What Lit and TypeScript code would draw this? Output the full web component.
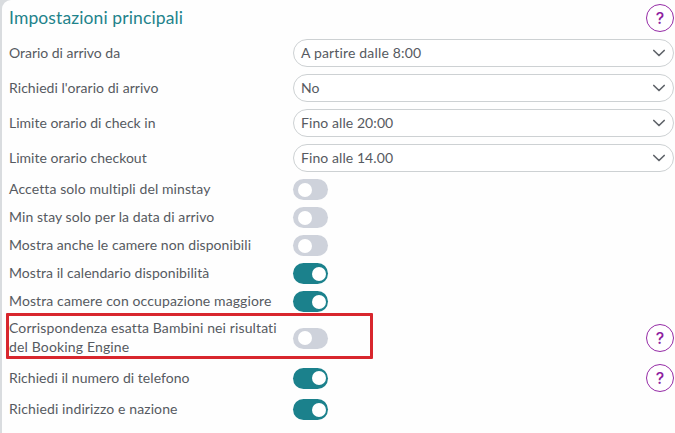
import { LitElement, html, css, svg } from "lit";
import { customElement, property } from "lit/decorators.js";
import { styleMap } from "lit/directives/style-map.js";

type Line = { text: string; spacing: number };
type Row = {
  label: Line[];
  value?: Line;
  on?: boolean;
  help?: boolean;
  marked?: boolean;
};

const line = (text: string, spacing = 0): Line => ({ text, spacing });

const rows: Row[] = [
  { label: [line("Orario di arrivo da", -0.03)], value: line("A partire dalle 8:00", 0.17) },
  { label: [line("Richiedi l'orario di arrivo", 0.05)], value: line("No") },
  { label: [line("Limite orario di check in")], value: line("Fino alle 20:00", 0.08) },
  { label: [line("Limite orario checkout", 0.02)], value: line("Fino alle 14.00", 0.08) },
  { label: [line("Accetta solo multipli del minstay", 0.1)], on: false },
  { label: [line("Min stay solo per la data di arrivo", 0.07)], on: false },
  { label: [line("Mostra anche le camere non disponibili", 0.07)], on: false },
  { label: [line("Mostra il calendario disponibilità", 0.05)], on: true },
  { label: [line("Mostra camere con occupazione maggiore", 0.11)], on: true },
  {
    label: [
      line("Corrispondenza esatta Bambini nei risultati", 0.12),
      line("del Booking Engine", 0.15),
    ],
    on: false,
    help: true,
    marked: true,
  },
  { label: [line("Richiedi il numero di telefono", 0.04)], on: true, help: true },
  { label: [line("Richiedi indirizzo e nazione", 0.11)], on: true },
];

const spaced = (l: Line) =>
  html`<span class="line" style=${styleMap({ letterSpacing: `${l.spacing}px` })}>${l.text}</span>`;

@customElement("help-button")
export class HelpButton extends LitElement {
  static styles = css`
    :host { display: block; width: 28px; height: 28px; }
    .help {
      box-sizing: border-box; width: 28px; height: 28px; padding: 0;
      display: flex; align-items: center; justify-content: center;
      border: 1.3px solid #952ba6; border-radius: 50%; background: #fff;
    }
    .glyph { font: 500 16px/1 Inter, sans-serif; color: #8d20a0; }
  `;
  render() {
    return html`<button class="help"><span class="glyph">?</span></button>`;
  }
}

@customElement("toggle-switch")
export class ToggleSwitch extends LitElement {
  @property({ type: Boolean }) on = false;
  static styles = css`
    :host { display: block; }
    .track {
      box-sizing: border-box; display: flex; align-items: center;
      width: 35px; height: 21px; padding: 0 2px 0 5px;
      border-radius: 11px; background: #ced2db;
    }
    .on { justify-content: flex-end; background: #1b818c; }
    .knob { width: 14px; height: 14px; border-radius: 50%; background: #fff; }
  `;
  render() {
    return html`<div class="track ${this.on ? "on" : ""}"><div class="knob"></div></div>`;
  }
}

@customElement("app-root")
export class AppRoot extends LitElement {
  static styles = css`
    :host {
      display: block; height: 433px; overflow: hidden; background: #d9dcdf;
      font: 14px/19px Lato, sans-serif; color: #565a61;
    }
    .panel {
      box-sizing: border-box; height: 433px; margin-left: 2px; padding: 4px 1px 0 7px;
      display: flex; flex-direction: column; gap: 7px;
      background: #fefefe; border-radius: 9px 0 0 0;
    }
    .head { display: flex; align-items: center; justify-content: space-between; height: 28px; }
    .title { margin: 0; font-size: 17.5px; font-weight: 400; line-height: 28px; color: #1e838b; }
    .row { display: grid; grid-template-columns: 284px 1fr auto; align-items: center; position: relative; }
    .label { margin: -1px 0 1px; }
    .line { display: block; width: max-content; white-space: nowrap; }
    .select {
      box-sizing: border-box; grid-column: 2 / 4; height: 28px; padding: 0 7px;
      display: flex; align-items: center; justify-content: space-between;
      border: 1px solid #cdd1d3; border-radius: 14px; background: #fff;
    }
    .value { margin: -1px 0 1px; }
    .chevron { width: 14px; height: 8px; }
    .mark {
      position: absolute; left: -3px; top: -6px; width: 367px; height: 46px;
      box-sizing: border-box; border: 3px solid #d8262d; border-radius: 1px;
    }
  `;

  control(row: Row) {
    if (row.value) {
      return html`<div class="select">
        <div class="value">${spaced(row.value)}</div>
        <svg class="chevron" viewBox="0 0 14 8">
          ${svg`<path d="M1.8 1.5 L7 6.5 L12.2 1.5" fill="none" stroke="#60646a" stroke-width="1.7" stroke-linecap="round" stroke-linejoin="round"/>`}
        </svg>
      </div>`;
    }
    return html`<toggle-switch ?on=${row.on}></toggle-switch>
      ${row.help ? html`<help-button></help-button>` : ""}`;
  }

  render() {
    return html`<main class="panel">
      <header class="head">
        <h1 class="title">${spaced(line("Impostazioni principali", 0.11))}</h1>
        <help-button></help-button>
      </header>
      ${rows.map(
        (row) => html`<div class="row">
          <div class="label">${row.label.map(spaced)}</div>
          ${this.control(row)}
          ${row.marked ? html`<div class="mark"></div>` : ""}
        </div>`,
      )}
    </main>`;
  }
}
